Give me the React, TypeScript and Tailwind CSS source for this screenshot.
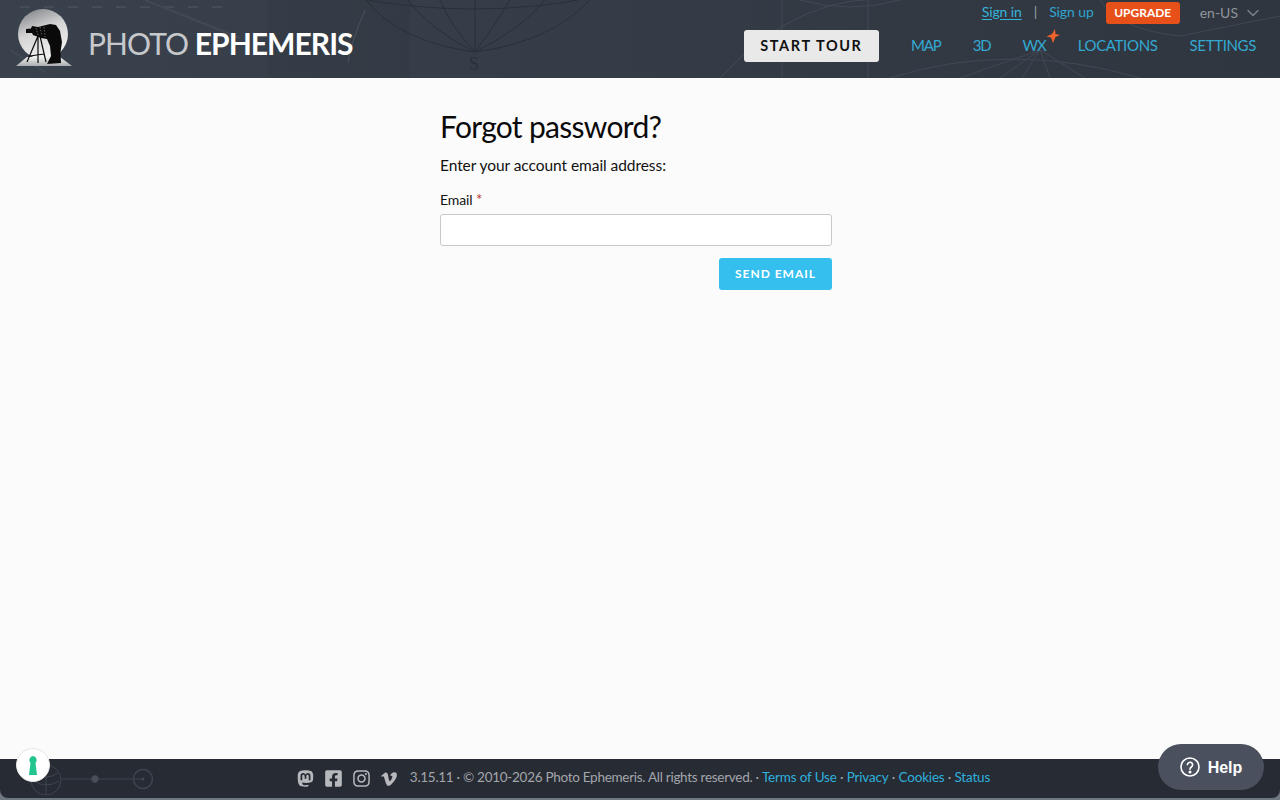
import { ChevronDown } from "lucide-react";
import { FaFacebookSquare, FaInstagram, FaMastodon, FaVimeoV } from "react-icons/fa";

const navItems = ["MAP", "3D", "WX", "LOCATIONS", "SETTINGS"];

function Logo() {
  return (
    <svg width="60" height="58" viewBox="15 9 60 58" className="shrink-0 mb-[3px]">
      <defs>
        <linearGradient id="globe" x1="0.2" y1="0" x2="0.6" y2="1">
          <stop offset="0" stopColor="#84868a" />
          <stop offset="0.45" stopColor="#d4d4d5" />
          <stop offset="1" stopColor="#f4f4f4" />
        </linearGradient>
        <linearGradient id="base" x1="0" y1="0" x2="0" y2="1">
          <stop offset="0" stopColor="#f2f2f2" />
          <stop offset="1" stopColor="#a9abae" />
        </linearGradient>
      </defs>
      <circle cx="43" cy="34" r="25" fill="url(#globe)" />
      <path d="M16 66 L27 57 H60 L72 66 Z" fill="url(#base)" />
      <path d="M26 29 L31 28.5 L32 26 L38 27 L46 25 L50 24 L56 25 L60 31 L62 42 L60.5 52 L61 63 L47 64 L51 56 L50 46 L47 39 L41 38 L33 35 L32 33 L26 33 Z" fill="#0a0a0a" />
      <path d="M36 28 L38 35 M40 27 L42 36 M44 27 L45 37" stroke="#777" strokeWidth="0.8" strokeDasharray="1.5 1.5" fill="none" />
      <path d="M38 36 L27 62 M38 36 L38 63 M40 36 L46 62 M30 56 L44 54" stroke="#0a0a0a" strokeWidth="1.2" fill="none" />
    </svg>
  );
}

function HeaderArt() {
  return (
    <svg className="absolute inset-0 w-full h-full" viewBox="0 0 1280 78" fill="none">
      <rect x="268" y="0" width="142" height="78" fill="#2c323d" opacity="0.25" />
      <path d="M20 7 H230" stroke="#4a525e" strokeWidth="1.5" strokeDasharray="10 14" />
      <path d="M145 0 L240 38 M10 50 L45 72" stroke="#414956" strokeWidth="2" />
      <path d="M365 10 Q350 45 348 63" stroke="#4a525e" />
      <g stroke="#2a303a" strokeWidth="1">
        <path d="M355 -2 Q475 20 590 -2" />
        <path d="M366 0 Q400 42 475 52 Q550 42 590 0" />
        <path d="M408 0 Q430 30 475 52 Q520 30 545 0" />
        <path d="M440 0 Q450 25 475 52 Q495 25 510 0" />
        <path d="M475 0 V52" />
      </g>
      <text x="469" y="70" fill="#2a303a" fontSize="18" fontFamily="Liberation Serif, serif">S</text>
      <g stroke="#454d5a" strokeWidth="1" opacity="0.8">
        <path d="M720 78 Q800 -10 900 0" />
        <path d="M782 0 V78 M868 0 V78" />
        <path d="M800 0 Q850 14 900 0" />
        <path d="M890 78 Q1010 40 1140 78" />
        <path d="M1040 50 L1000 78 M1040 50 L1022 78 M1040 50 L1050 78 M1040 50 L1085 78 M1040 50 L960 78" />
        <path d="M1100 0 Q1120 30 1180 36 M1180 36 L1280 16" />
      </g>
    </svg>
  );
}

function FooterArt() {
  return (
    <svg width="130" height="36" viewBox="0 0 130 36" fill="none" stroke="#3f444e" strokeWidth="1" className="absolute left-[30px] top-0">
      <circle cx="16" cy="21" r="15" />
      <path d="M6 14 Q16 22 28 14 M4 22 Q16 30 29 22 M16 6 V36" />
      <path d="M32 20 H112" />
      <circle cx="65" cy="20" r="3.5" fill="#4a4f58" />
      <circle cx="113" cy="20" r="9.5" strokeWidth="1.5" />
      <circle cx="113" cy="20" r="1" fill="#6b7079" />
    </svg>
  );
}

export default function App() {
  return (
    <div className="h-[800px] flex flex-col bg-[#fbfbfb] font-['Lato',sans-serif] overflow-hidden">
      <header className="relative h-[78px] shrink-0 bg-linear-to-r from-[#39414d] to-[#30363f] flex justify-between">
        <HeaderArt />
        <div className="relative flex items-center pl-[15px] gap-[13px]">
          <Logo />
          <div className="mt-[7px] text-[30px] leading-none tracking-[-0.95px] text-[#c6c8cb]">
            PHOTO <span className="font-bold text-white">EPHEMERIS</span>
          </div>
        </div>
        <div className="relative flex flex-col items-end pr-[24px]">
          <div className="flex items-center h-[26px] text-[14px]">
            <div className="flex items-center mb-[4px] tracking-[-0.1px]">
              <a className="text-[#35b4dc] underline underline-offset-2">Sign in</a>
              <span className="mx-[12px] text-[#9aa0a8]">|</span>
              <a className="text-[#2fa5cc]">Sign up</a>
            </div>
            <span className="ml-[12px] bg-[#e8501a] text-white text-[12px] font-bold rounded-[3px] h-[22px] w-[74px] flex items-center justify-center">UPGRADE</span>
            <span className="ml-[20px] mb-[2px] text-[#8f959d]">en-US</span>
            <ChevronDown size={20} strokeWidth={1.5} className="ml-[5px] mr-[-7px] text-[#7e848c]" />
          </div>
          <nav className="flex items-center mt-[4px] h-[32px] text-[15px] text-[#33a9d2]">
            <button className="bg-[#e9e9ea] text-[#111] text-[14.5px] font-bold tracking-[1.6px] rounded-[3px] h-[32px] w-[135px] mr-[32px]">START TOUR</button>
            <div className="flex gap-[32px] mb-[2px] tracking-[-0.35px]">
              {navItems.map((item) => (
                <a key={item} className={item === "MAP" || item === "WX" || item === "3D" ? "relative tracking-[-1.1px]" : "relative"}>
                  {item}
                  {item === "WX" && (
                    <svg width="14" height="14" viewBox="0 0 14 14" className="absolute right-[-14px] top-[-5px]">
                      <path d="M9 0 L9.5 5 L14 6 L9.5 8 L7 14 L5 8.5 L0.5 7.5 L6 5 Z" fill="#f0622c" />
                    </svg>
                  )}
                </a>
              ))}
            </div>
          </nav>
        </div>
      </header>

      <main className="flex-1 flex justify-center">
        <div className="w-[392px] mr-[8px] pt-[28px]">
          <h1 className="text-[30px] leading-[40px] tracking-[-0.7px] text-[#0a0a0a]">Forgot password?</h1>
          <p className="mt-[9px] text-[15.5px] leading-[20px] tracking-[-0.06px] text-[#111]">Enter your account email address:</p>
          <label className="block mt-[15px] text-[14px] leading-[18px] tracking-[-0.1px] text-[#111]">
            Email <span className="text-[#b33] text-[15px]">*</span>
          </label>
          <input className="block mt-[5px] w-full h-[32px] bg-white border border-[#c9c9c9] rounded-[3px]" />
          <div className="flex justify-end mt-[12px]">
            <button className="w-[113px] h-[32px] bg-[#35bfee] text-white text-[12px] font-bold tracking-[1px] rounded-[3px]">SEND EMAIL</button>
          </div>
        </div>
      </main>

      <footer className="relative h-[41px] shrink-0 bg-[#6f7780]">
        <div className="h-[39px] bg-[#272b34] rounded-b-[8px] flex items-center justify-center">
          <FooterArt />
          <div className="flex items-center text-[#a3a6ab] text-[13.5px] tracking-[-0.17px] mr-[-6px]">
            <div className="flex items-center gap-[9px] mr-[12px] text-[#b6b8bc]">
              <FaMastodon size={19} />
              <FaFacebookSquare size={19} />
              <FaInstagram size={19} />
              <FaVimeoV size={18} />
            </div>
            <div className="flex items-center mb-[2px]">
              <span className="tracking-[-0.28px]">3.15.11 · © 2010-2026 Photo Ephemeris. All rights reserved. ·&nbsp;</span>
              <a className="text-[#2fb0dc]">Terms of Use</a>
              <span>&nbsp;·&nbsp;</span>
              <a className="text-[#2fb0dc]">Privacy</a>
              <span>&nbsp;·&nbsp;</span>
              <a className="text-[#2fb0dc]">Cookies</a>
              <span>&nbsp;·&nbsp;</span>
              <a className="text-[#2fb0dc]">Status</a>
            </div>
          </div>
        </div>
        <div className="absolute left-[16px] top-[-11px] w-[34px] h-[34px] rounded-full bg-white border border-[#e6e6e6] flex items-center justify-center">
          <svg width="10" height="19" viewBox="0 0 10 19">
            <path d="M5 0 A4.2 4.2 0 0 1 7.5 7 L9 19 H1 L2.5 7 A4.2 4.2 0 0 1 5 0 Z" fill="#22c58b" />
          </svg>
        </div>
        <button className="absolute right-[16px] top-[-15px] w-[106px] h-[46px] rounded-full bg-[#4a505e] text-white flex items-center justify-center gap-[8px] font-['Liberation_Sans',sans-serif] font-bold text-[16px]">
          <svg width="20" height="20" viewBox="0 0 20 20" fill="none" stroke="white" strokeWidth="1.6">
            <circle cx="10" cy="10" r="9" />
            <path d="M7.4 7.8 A2.6 2.6 0 1 1 11.4 10 C10.4 10.6 10 11 10 12.2" strokeLinecap="round" />
            <circle cx="10" cy="15" r="0.7" fill="white" />
          </svg>
          <span className="mt-[2px]">Help</span>
        </button>
      </footer>
    </div>
  );
}
